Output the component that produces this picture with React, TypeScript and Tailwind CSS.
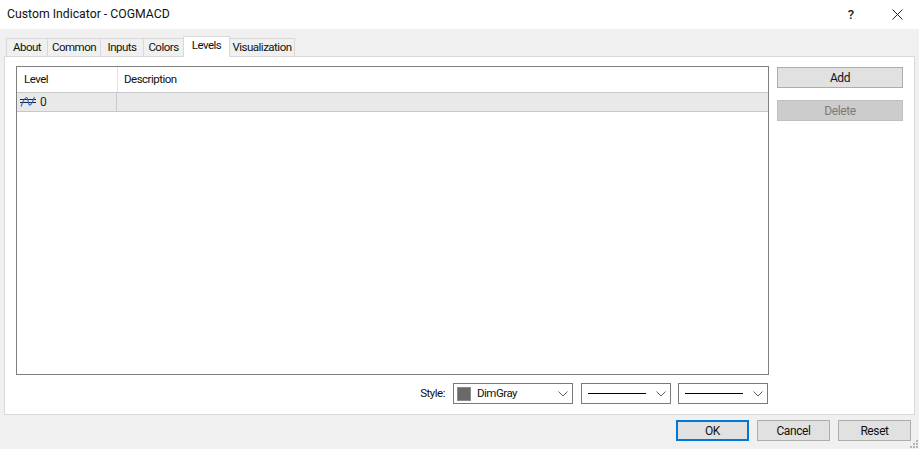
import React from "react";

const font = { fontFamily: '"Roboto","Open Sans",sans-serif' };

function Chevron() {
  return (
    <svg width="10" height="6" viewBox="0 0 10 6" className="shrink-0">
      <path d="M0.5 0.5 L5 5 L9.5 0.5" fill="none" stroke="#606060" strokeWidth="1" />
    </svg>
  );
}

function Tab({ label, width, active }: { label: string; width: string; active?: boolean }) {
  return active ? (
    <div className={`${width} h-[21px] bg-white border border-b-0 border-[#d9d9d9] flex items-center justify-center text-[11.5px] tracking-[-0.5px] text-[#111] pb-[3px] -mb-px z-10`}>
      {label}
    </div>
  ) : (
    <div className={`${width} h-[18px] bg-[#f0f0f0] border border-b-0 border-[#d9d9d9] flex items-center justify-center text-[11.5px] tracking-[-0.5px] text-[#111]`}>
      {label}
    </div>
  );
}

function Btn({ label, cls }: { label: string; cls: string }) {
  return (
    <div className={`w-[73px] h-[21px] bg-[#e1e1e1] flex items-center justify-center text-[12px] tracking-[-0.4px] text-[#111] ${cls}`}>
      {label}
    </div>
  );
}

function LineSelect({ cls }: { cls?: string }) {
  return (
    <div className={`w-[90px] h-[21px] bg-white border border-[#7a7a7a] flex items-center pl-[6px] pr-[4px] ${cls ?? ""}`}>
      <div className="flex-1 h-px bg-black mr-[10px]" />
      <Chevron />
    </div>
  );
}

export default function App() {
  return (
    <div className="w-[919px] h-[449px] bg-[#f0f0f0] flex flex-col overflow-hidden relative" style={font}>
      <div className="h-[29px] bg-white flex items-center pl-[7px] pr-[16px] shrink-0">
        <span className="text-[12.25px] text-[#111] flex-1 pb-px">Custom Indicator - COGMACD</span>
        <span className="text-[13px] text-[#222] font-medium mr-[38px]">?</span>
        <svg width="11" height="11" viewBox="0 0 11 11">
          <path d="M0.5 0.5 L10.5 10.5 M10.5 0.5 L0.5 10.5" stroke="#222" strokeWidth="1" fill="none" />
        </svg>
      </div>

      <div className="flex items-end pl-[6px] h-[27px] shrink-0 relative z-10">
        <Tab label="About" width="w-[42px]" />
        <Tab label="Common" width="w-[54px] -ml-px" />
        <Tab label="Inputs" width="w-[44px] -ml-px" />
        <Tab label="Colors" width="w-[41px] -ml-px" />
        <Tab label="Levels" width="w-[47px] -ml-px" active />
        <Tab label="Visualization" width="w-[66px] -ml-px" />
      </div>

      <div className="h-[359px] mx-[4px] bg-white border border-[#d9d9d9] flex shrink-0 pt-[9px] pl-[11px] pr-[11px]">
        <div className="flex flex-col w-[753px]">
          <div className="h-[309px] border border-[#7f7f7f] bg-white flex flex-col">
            <div className="h-[26px] flex border-b border-[#c8c8c8] text-[11.5px] tracking-[-0.5px] text-[#111] items-center">
              <div className="w-[101px] h-full pl-[7px] flex items-center border-r border-[#e2e2e2]">Level</div>
              <div className="pl-[6px]">Description</div>
            </div>
            <div className="h-[19px] flex bg-[#e9e9e9] border-b border-[#c8c8c8] text-[12px] items-center">
              <div className="w-[100px] h-full flex items-center pl-[3px] border-r border-[#c8c8c8]">
                <svg width="16" height="12" viewBox="0 0 16 12" className="mr-[4px]">
                  <path d="M0 3.5 H16 M0 6.5 H16" stroke="#222" strokeWidth="1" fill="none" />
                  <path d="M1 10.5 C3 6 4.5 1.5 6.5 1.5 C8.5 1.5 8 8.5 9.5 9 C11 9.5 13 5 14.5 1" fill="none" stroke="#2f6fd6" strokeWidth="1.2" />
                </svg>
                <span className="text-[#222]">0</span>
              </div>
            </div>
          </div>
          <div className="flex justify-end items-center gap-[8px] mt-[8px] pr-px">
            <span className="text-[11.5px] tracking-[-0.5px] text-[#111]">Style:</span>
            <div className="w-[120px] h-[21px] bg-white border border-[#7a7a7a] flex items-center pl-[3px] pr-[4px]">
              <div className="w-[14px] h-[14px] bg-[#696969] border border-[#8a8a8a] mr-[6px]" />
              <span className="text-[11.5px] tracking-[-0.5px] text-[#111] flex-1">DimGray</span>
              <Chevron />
            </div>
            <LineSelect />
            <LineSelect cls="-ml-px" />
          </div>
        </div>
        <div className="flex flex-col ml-[8px] pt-px w-[126px]">
          <div className="h-[21px] bg-[#e1e1e1] border border-[#adadad] flex items-center justify-center text-[12px] tracking-[-0.4px] text-[#111]">Add</div>
          <div className="h-[21px] mt-[12px] bg-[#cccccc] border border-[#bfbfbf] flex items-center justify-center text-[12px] tracking-[-0.4px] text-[#7a7a7a]">Delete</div>
        </div>
      </div>

      <div className="flex justify-end gap-[8px] pr-[8px] mt-[5px]">
        <Btn label="OK" cls="border-2 border-[#0078d7]" />
        <Btn label="Cancel" cls="border border-[#adadad]" />
        <Btn label="Reset" cls="border border-[#adadad]" />
      </div>
      <svg width="8" height="8" viewBox="0 0 8 8" className="absolute right-px bottom-px">
        <path d="M6 0h2v2h-2z M3 3h2v2h-2z M6 3h2v2h-2z M0 6h2v2h-2z M3 6h2v2h-2z M6 6h2v2h-2z" fill="#b5b5b5" />
      </svg>
    </div>
  );
}
